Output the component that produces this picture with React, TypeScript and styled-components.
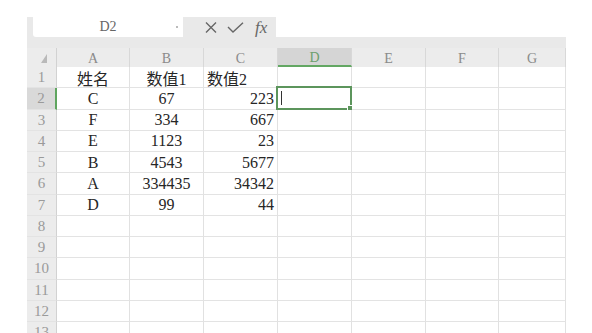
import React from "react";
import styled, { createGlobalStyle, css } from "styled-components";

const GlobalStyle = createGlobalStyle`
  html, body { margin: 0; padding: 0; background: #ffffff; overflow: hidden; }
  #root { width: 592px; height: 333px; overflow: hidden; }
`;

const SERIF = `"Liberation Serif", "Noto Sans CJK SC", serif`;

const Page = styled.div`
  padding: 17px 0 0 27px;
  width: 539px;
`;

const Toolbar = styled.div`
  background: #e9e9e9;
  display: flex;
  flex-direction: column;
`;

const ToolbarRow = styled.div`
  display: flex;
  height: 20px;
  padding-left: 6px;
  background: linear-gradient(to right, #e9e9e9 0, #e9e9e9 249px, #ffffff 249px);
`;

const NameBox = styled.div`
  width: 150px;
  background: #ffffff;
  border-bottom-left-radius: 3px;
  display: flex;
  align-items: center;
  justify-content: center;
  position: relative;
  font-family: ${SERIF};
  font-size: 14px;
  color: #666;
`;

const Caret = styled.span`
  position: absolute;
  right: 5px;
  top: 9px;
  width: 2px;
  height: 2px;
  background: #bbb;
`;

const FxTab = styled.div`
  width: 93px;
  background: #e9e9e9;
  border-top-right-radius: 4px;
  display: flex;
  align-items: center;
  gap: 10px;
  padding-left: 22px;
  box-sizing: border-box;
`;

const FxText = styled.span`
  font-family: ${SERIF};
  font-style: italic;
  font-size: 17px;
  color: #666;
  line-height: 1;
  margin-left: 1px;
`;

const FormulaInput = styled.div`
  flex: 1;
  background: #ffffff;
`;

const ToolbarStrip = styled.div`
  height: 11px;
`;

const Grid = styled.div`
  display: grid;
  grid-template-columns: 30px 73px 74px 74px 74px 74px 73px 67px;
  grid-template-rows: 19px;
  grid-auto-rows: 21.25px;
`;

const Corner = styled.div`
  background: #ececec;
  border-right: 1px solid #d2d2d2;
  box-sizing: border-box;
  position: relative;
`;

const CornerTriangle = styled.span`
  position: absolute;
  left: 14px;
  top: 6px;
  width: 0;
  height: 0;
  border-left: 6px solid transparent;
  border-bottom: 9px solid #b9b9b9;
`;

const ColHead = styled.div<{ $active?: boolean }>`
  background: ${(p) => (p.$active ? "#d5d5d5" : "#ececec")};
  border-right: 1px solid #d8d8d8;
  box-sizing: border-box;
  display: flex;
  align-items: center;
  justify-content: center;
  padding-top: 3px;
  font-family: ${SERIF};
  font-size: 14px;
  color: ${(p) => (p.$active ? "#6d9f6d" : "#8a8a8a")};
  ${(p) =>
    p.$active &&
    css`
      border-bottom: 2px solid #63a763;
    `}
`;

const RowHead = styled.div<{ $active?: boolean }>`
  background: ${(p) => (p.$active ? "#d9d9d9" : "#ececec")};
  border-right: ${(p) => (p.$active ? "2px solid #5fa55f" : "1px solid #d2d2d2")};
  border-bottom: 1px solid #e3e3e3;
  box-sizing: border-box;
  display: flex;
  align-items: center;
  justify-content: center;
  padding-top: 1px;
  font-family: ${SERIF};
  font-size: 15px;
  color: #9a9a9a;
`;

const Cell = styled.div<{ $align?: "left" | "center" | "right" }>`
  border-right: 1px solid #e1e1e1;
  border-bottom: 1px solid #e3e3e3;
  box-sizing: border-box;
  display: flex;
  align-items: center;
  justify-content: ${(p) =>
    p.$align === "left" ? "flex-start" : p.$align === "right" ? "flex-end" : "center"};
  padding: 1px 3px 0;
  font-family: ${SERIF};
  font-size: 16px;
  color: #262626;
  position: relative;
  white-space: nowrap;
`;

const Selection = styled.div`
  position: absolute;
  left: -2px;
  top: -2px;
  right: -1px;
  bottom: -1px;
  border: 2px solid #5c955c;
  box-sizing: border-box;
  pointer-events: none;
`;

const TextCursor = styled.span`
  position: absolute;
  left: 3px;
  top: 3px;
  bottom: 3px;
  width: 1px;
  background: #333;
`;

const FillHandle = styled.span`
  position: absolute;
  right: -3px;
  bottom: -3px;
  width: 4px;
  height: 4px;
  background: #5c955c;
  border: 1px solid #fff;
`;

const columns = ["A", "B", "C", "D", "E", "F", "G"];

type Row = [string, string, string];
const data: Row[] = [
  ["姓名", "数值1", "数值2"],
  ["C", "67", "223"],
  ["F", "334", "667"],
  ["E", "1123", "23"],
  ["B", "4543", "5677"],
  ["A", "334435", "34342"],
  ["D", "99", "44"],
];

const TOTAL_ROWS = 13;

export default function App() {
  const rows = Array.from({ length: TOTAL_ROWS }, (_, i) => i + 1);
  return (
    <>
      <GlobalStyle />
      <Page>
        <Toolbar>
          <ToolbarRow>
            <NameBox>
              D2
              <Caret />
            </NameBox>
            <FxTab>
              <svg width="12" height="11" viewBox="0 0 12 11">
                <path d="M1 0.5 L11 10.5 M11 0.5 L1 10.5" stroke="#666" strokeWidth="1.4" fill="none" />
              </svg>
              <svg width="17" height="11" viewBox="0 0 17 11">
                <path d="M1 5 L6 10 L16 0.8" stroke="#666" strokeWidth="1.4" fill="none" />
              </svg>
              <FxText>fx</FxText>
            </FxTab>
            <FormulaInput />
          </ToolbarRow>
          <ToolbarStrip />
        </Toolbar>
        <Grid>
          <Corner>
            <CornerTriangle />
          </Corner>
          {columns.map((c) => (
            <ColHead key={c} $active={c === "D"}>
              {c}
            </ColHead>
          ))}
          {rows.map((r) => {
            const row = data[r - 1];
            return (
              <React.Fragment key={r}>
                <RowHead $active={r === 2}>{r}</RowHead>
                <Cell $align="center">{row ? row[0] : ""}</Cell>
                <Cell $align="center">{row ? row[1] : ""}</Cell>
                <Cell $align={r === 1 ? "left" : "right"}>{row ? row[2] : ""}</Cell>
                <Cell>
                  {r === 2 && (
                    <Selection>
                      <TextCursor />
                      <FillHandle />
                    </Selection>
                  )}
                </Cell>
                <Cell />
                <Cell />
                <Cell />
              </React.Fragment>
            );
          })}
        </Grid>
      </Page>
    </>
  );
}
